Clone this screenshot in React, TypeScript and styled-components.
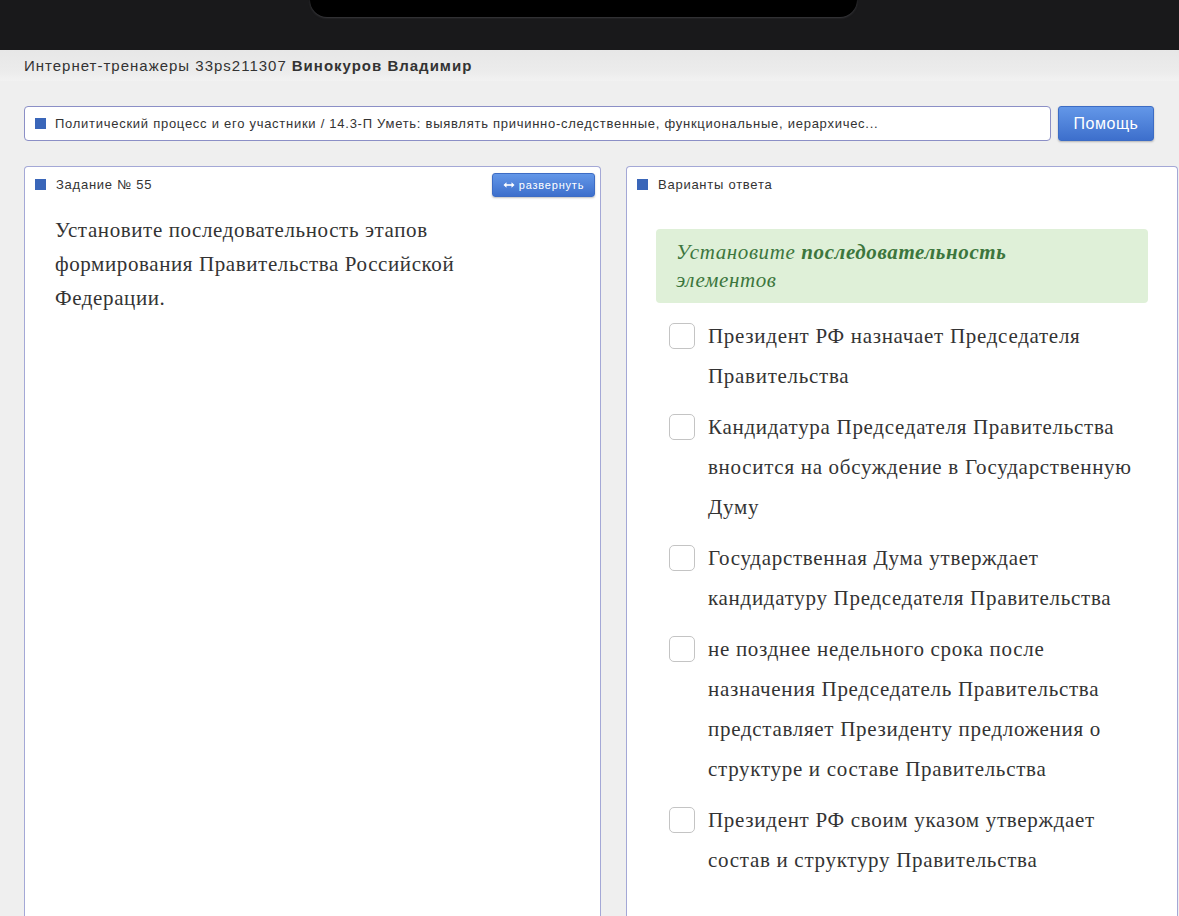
import styled, { createGlobalStyle } from 'styled-components';

const GlobalStyle = createGlobalStyle`
    html, body {
        margin: 0;
        padding: 0;
        background: #efefef;
        font-family: "Liberation Sans", Arial, sans-serif;
        color: #333;
    }
    * { box-sizing: border-box; }
`;

const answers = [
    'Президент РФ назначает Председателя Правительства',
    'Кандидатура Председателя Правительства вносится на обсуждение в Государственную Думу',
    'Государственная Дума утверждает кандидатуру Председателя Правительства',
    'не позднее недельного срока после назначения Председатель Правительства представляет Президенту предложения о структуре и составе Правительства',
    'Президент РФ своим указом утверждает состав и структуру Правительства',
];

const ArrowsIcon = () => (
    <svg width="12" height="8" viewBox="0 0 12 8" fill="none">
        <path d="M3 4h6" stroke="#fff" strokeWidth="1.6" />
        <path d="M0.5 4L3.5 1.2v5.6z M11.5 4L8.5 1.2v5.6z" fill="#fff" />
    </svg>
);

const App = () => (
    <Page>
        <GlobalStyle />
        <DeviceBar>
            <Notch />
        </DeviceBar>
        <Header>
            Интернет-тренажеры 33ps211307 <b>Винокуров Владимир</b>
        </Header>
        <Main>
            <TopicRow>
                <TopicBox>
                    <Marker />
                    <TopicText>
                        Политический процесс и его участники / 14.3-П Уметь: выявлять причинно-следственные, функциональные, иерархичес...
                    </TopicText>
                </TopicBox>
                <HelpButton>Помощь</HelpButton>
            </TopicRow>
            <Panels>
                <Panel>
                    <PanelHeader>
                        <Marker />
                        <PanelTitle>Задание № 55</PanelTitle>
                        <ExpandButton><ArrowsIcon /> развернуть</ExpandButton>
                    </PanelHeader>
                    <Question>
                        Установите последовательность этапов формирования Правительства Российской Федерации.
                    </Question>
                </Panel>
                <Panel>
                    <PanelHeader>
                        <Marker />
                        <PanelTitle>Варианты ответа</PanelTitle>
                    </PanelHeader>
                    <AnswersBody>
                        <Hint>
                            Установите <b>последовательность</b><br />элементов
                        </Hint>
                        <AnswerList>
                            { answers.map((text) => (
                                <Answer key={text}>
                                    <Checkbox />
                                    <AnswerText>{ text }</AnswerText>
                                </Answer>
                            )) }
                        </AnswerList>
                    </AnswersBody>
                </Panel>
            </Panels>
        </Main>
    </Page>
);

const Page = styled.div`
    height: 916px;
    overflow: hidden;
    display: flex;
    flex-direction: column;
    background: #efefef;
`;

const DeviceBar = styled.div`
    height: 50px;
    background: #19191b;
    display: flex;
    justify-content: center;
    flex-shrink: 0;
`;

const Notch = styled.div`
    margin-right: 12px;
    width: 547px;
    height: 17px;
    background: #000;
    border-radius: 0 0 32px 32px;
    box-shadow: 0 1px 2px rgba(80, 80, 85, 0.6);
`;

const Header = styled.div`
    height: 31px;
    flex-shrink: 0;
    padding: 0 24px;
    display: flex;
    align-items: center;
    font-size: 15px;
    letter-spacing: 1px;
    color: #333;
    background: linear-gradient(to bottom, #e7e7e7, #ececec 70%, #f2f2f2);

    b {
        margin-left: 5px;
        font-weight: bold;
    }
`;

const Main = styled.div`
    flex: 1;
    padding: 25px 0 0 24px;
    display: flex;
    flex-direction: column;
    gap: 25px;
    min-height: 0;
`;

const TopicRow = styled.div`
    display: flex;
    gap: 7px;
    padding-right: 25px;
    height: 35px;
`;

const TopicBox = styled.div`
    flex: 1;
    display: flex;
    align-items: center;
    gap: 9px;
    padding: 0 10px;
    background: #fff;
    border: 1px solid #8b8fc6;
    border-radius: 4px;
    overflow: hidden;
`;

const Marker = styled.span`
    width: 11px;
    height: 11px;
    background: #3a66b9;
    flex-shrink: 0;
`;

const TopicText = styled.span`
    font-size: 13px;
    letter-spacing: 0.73px;
    color: #333;
    white-space: nowrap;
    overflow: hidden;
`;

const BlueButton = styled.button`
    border: 1px solid #3d6cc4;
    border-radius: 3px;
    background: linear-gradient(to bottom, #6397e8, #3d6fcc);
    color: #fff;
    font-family: "Liberation Sans", Arial, sans-serif;
    cursor: pointer;
    box-shadow: 0 1px 2px rgba(0, 0, 0, 0.25);
`;

const HelpButton = styled(BlueButton)`
    width: 96px;
    font-size: 16px;
    letter-spacing: 0.5px;
`;

const Panels = styled.div`
    flex: 1;
    display: grid;
    grid-template-columns: 577px 1fr;
    gap: 25px;
    padding-right: 1px;
    min-height: 0;
`;

const Panel = styled.div`
    background: #fff;
    border: 1px solid #a4a8d6;
    border-bottom: none;
    border-radius: 4px 4px 0 0;
    display: flex;
    flex-direction: column;
`;

const PanelHeader = styled.div`
    height: 35px;
    display: flex;
    align-items: center;
    gap: 10px;
    padding: 0 5px 0 10px;
    flex-shrink: 0;
`;

const PanelTitle = styled.span`
    flex: 1;
    font-size: 13px;
    letter-spacing: 0.75px;
    color: #333;
`;

const ExpandButton = styled(BlueButton)`
    width: 103px;
    height: 24px;
    font-size: 11px;
    letter-spacing: 0.8px;
    display: flex;
    align-items: center;
    justify-content: center;
    gap: 4px;
    padding: 0;
`;

const serif = `"Liberation Serif", "Times New Roman", serif`;

const Question = styled.div`
    padding: 11px 90px 0 30px;
    font-family: ${serif};
    font-size: 21px;
    letter-spacing: 0.6px;
    line-height: 34px;
    color: #333;
`;

const AnswersBody = styled.div`
    padding: 27px 29px 0 29px;
`;

const Hint = styled.div`
    background: #dff0d8;
    border-radius: 4px;
    padding: 9px 20px;
    font-family: ${serif};
    font-style: italic;
    font-size: 21px;
    letter-spacing: 0.6px;
    line-height: 28px;
    color: #3c763d;

    b { font-weight: bold; }
`;

const AnswerList = styled.div`
    margin-top: 13px;
    padding-left: 13px;
    display: flex;
    flex-direction: column;
    gap: 11px;
`;

const Answer = styled.div`
    display: flex;
    align-items: flex-start;
    gap: 13px;
`;

const Checkbox = styled.span`
    width: 26px;
    height: 26px;
    margin-top: 7px;
    flex-shrink: 0;
    border: 1px solid #c4c4c4;
    border-radius: 5px;
    background: #fff;
`;

const AnswerText = styled.div`
    font-family: ${serif};
    font-size: 21px;
    letter-spacing: 0.7px;
    line-height: 40px;
    color: #333;
    padding-right: 8px;
`;

export default App;
